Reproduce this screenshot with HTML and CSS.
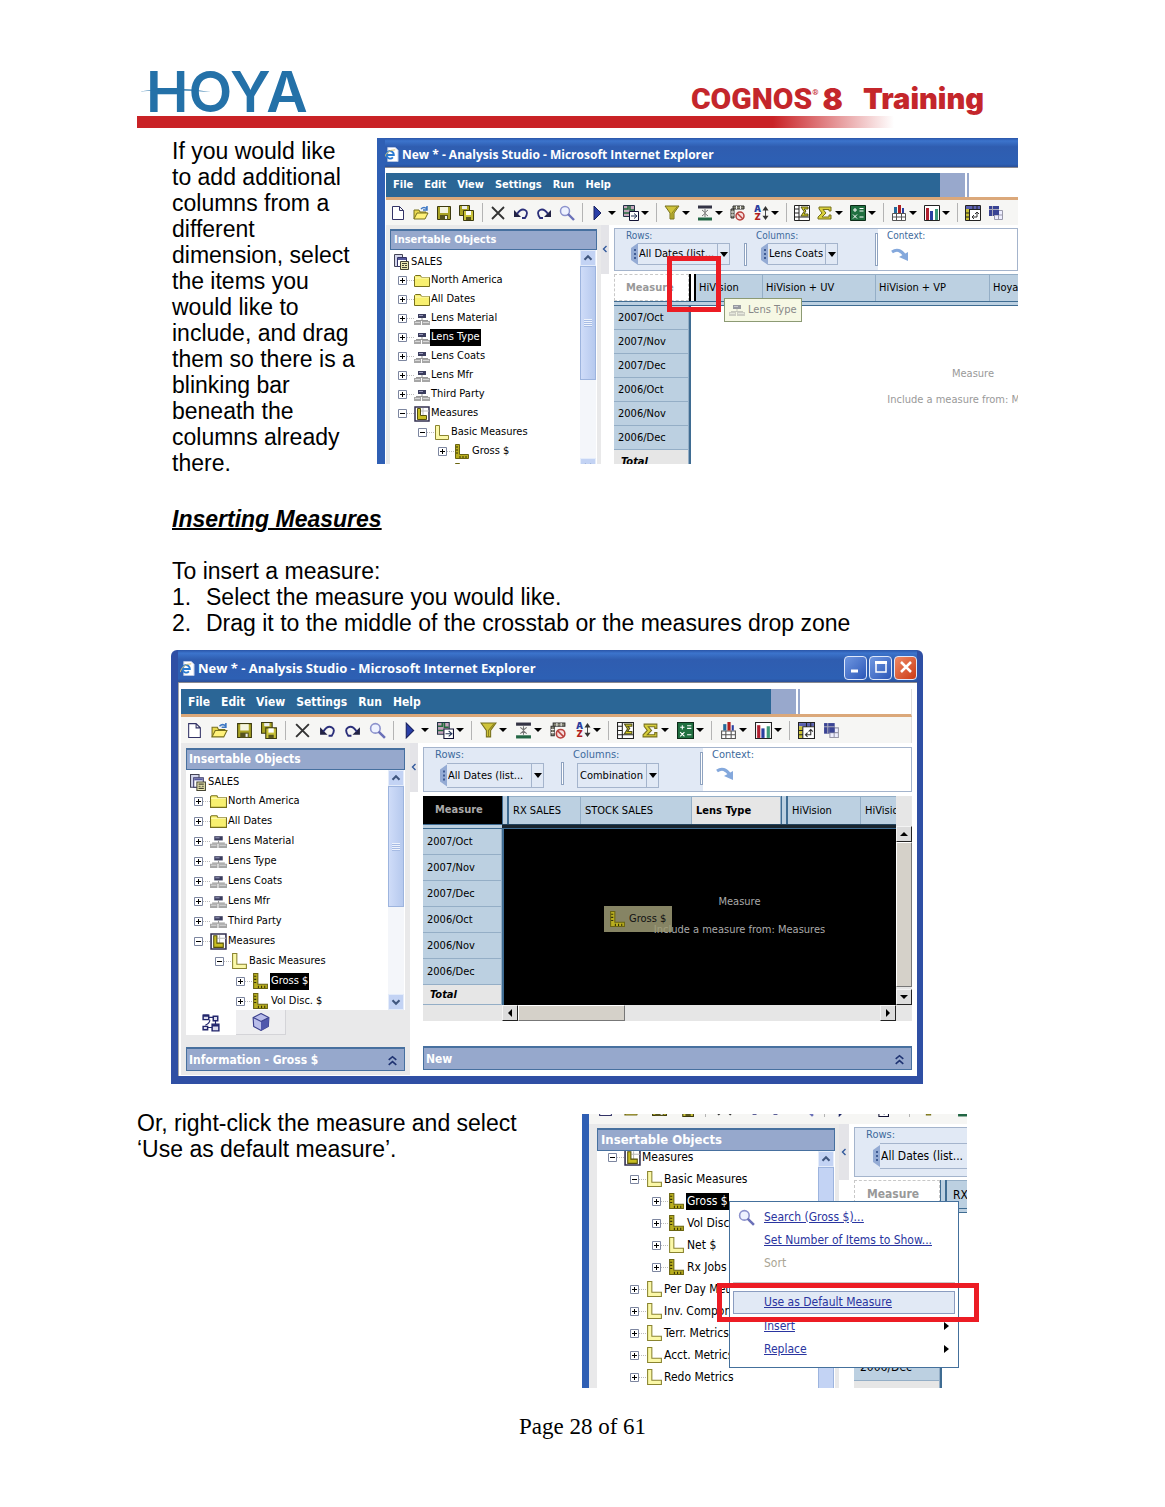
FILE: index.html
```html
<!DOCTYPE html>
<html lang="en">
<head>
<meta charset="utf-8">
<meta name="viewport" content="width=device-width, initial-scale=1">
<title>Cognos 8 Training - Inserting Measures</title>
<link rel="stylesheet" href="styles.css">
</head>
<body>
<svg class="sprite" aria-hidden="true">
  <symbol id="ie" viewBox="0 0 16 16"><path d="M4 .5h8l3 3v12H4z" fill="#fff" stroke="#b9c6e2"/><path d="M2.500 8.500h8A4 4 0 1 0 9.500 11" fill="none" stroke="#2b7bd0" stroke-width="2"/><path d="M0 12Q3 3 12 3" fill="none" stroke="#d8c070"/></symbol>
  <symbol id="new" viewBox="0 0 16 16"><path d="M2.500 1.500h7l4 4v9h-11zM9.500 1.500v4h4" fill="#fff" stroke="#336"/></symbol>
  <symbol id="open" viewBox="0 0 16 16"><path d="M1 14V5h5l1 2h6v2" fill="#e9d84e" stroke="#77701c"/><path d="M1 14l3-6h11l-3 6z" fill="#fff27a" stroke="#77701c"/><path d="M8 4q3-3 6 0M14 1v4h-4" fill="none" stroke="#3f78c4" stroke-width="1.500"/></symbol>
  <symbol id="save" viewBox="0 0 16 16"><path d="M1.500 1.500h13v13h-13z" fill="#a9a324" stroke="#3c3a10"/><path d="M4 2h8v6H4z" fill="#f4f4e0"/><path d="M4 10h8v5H4z" fill="#55531c"/><path d="M9 11h2v3H9z" fill="#eee"/></symbol>
  <symbol id="saveall" viewBox="0 0 16 16"><path d="M.5.5h10v10H.5z" fill="#a9a324" stroke="#3c3a10"/><path d="M3 1h5v3H3z" fill="#eee"/><path d="M4.500 5.500h10v10h-10z" fill="#c9c23a" stroke="#3c3a10"/><path d="M7 6h5v4H7z" fill="#fff"/><path d="M7 12h5v3H7z" fill="#55531c"/></symbol>
  <symbol id="cut" viewBox="0 0 16 16"><path d="M2 2l12 12M14 2L2 14" stroke="#333" stroke-width="1.800"/></symbol>
  <symbol id="undo" viewBox="0 0 16 16"><path d="M1 5v7h7z" fill="#224"/><path d="M4 9q4-6 8-4t0 8H9" fill="none" stroke="#2b2f7a" stroke-width="1.800"/></symbol>
  <symbol id="redo" viewBox="0 0 16 16"><path d="M15 5v7H8z" fill="#224"/><path d="M12 9Q8 3 4 5t0 8h3" fill="none" stroke="#2b2f7a" stroke-width="1.800"/></symbol>
  <symbol id="find" viewBox="0 0 16 16"><circle cx="6" cy="6" r="4.500" fill="#eef2ff" stroke="#8c92cc" stroke-width="1.500"/><path d="M9 9l6 6" stroke="#6a70b8" stroke-width="2.400"/></symbol>
  <symbol id="run" viewBox="0 0 16 16"><path d="M4 1l7 7-7 7z" fill="#2a3fa8" stroke="#1a2260"/></symbol>
  <symbol id="insert" viewBox="0 0 16 16"><path d="M.5.5h11v11H.5z" fill="#c6a4bc" stroke="#234"/><path d="M1 4h4V1M7 1v4h4M1 8h5" stroke="#236b3c" stroke-width="1.500" fill="none"/><path d="M6.500 6.500h9v9h-9z" fill="#fff" stroke="#113"/><path d="M8 11h5M11 8.500l3 2.500-3 2.500" stroke="#235" fill="none"/></symbol>
  <symbol id="filter" viewBox="0 0 16 16"><path d="M1 1h14L10 8v6H6V8z" fill="#cfc33a" stroke="#77701c"/><path d="M8 14V8l5-6" fill="none" stroke="#8a8220"/></symbol>
  <symbol id="suppress" viewBox="0 0 16 16"><path d="M1 2h14" stroke="#334" stroke-width="3"/><path d="M1 14h14" stroke="#264" stroke-width="3"/><path d="M8 4v8M5 5l3 2.500L11 5M5 11l3-2.500 3 2.500" stroke="#777" fill="none"/></symbol>
  <symbol id="hide" viewBox="0 0 16 16"><path d="M3 1h11v3H3zM1 4h3v9H1z" fill="#887" stroke="#333"/><path d="M6.500 1v3M10.500 1v3M1 7h3M1 10h3" stroke="#eee"/><circle cx="10" cy="11" r="4" fill="#f6dede" stroke="#b8403c" stroke-width="1.500"/><path d="M7 8l6 6" stroke="#b8403c" stroke-width="1.500"/></symbol>
  <symbol id="subtotal" viewBox="0 0 16 16"><path d="M.5.500h15v15H.5z" fill="#fff" stroke="#222"/><path d="M5 1v14M1 12h14M1 4h4M1 8h4" stroke="#222"/><path d="M7 2h7v2h-4l2 2-2 3h4v2H7l3-4.500z" fill="#d8d020" stroke="#55531c"/></symbol>
  <symbol id="sum" viewBox="0 0 16 16"><path d="M2 2h12v4h-2V4.500H6L9 8l-4 4h7v-2h2v4H1v-2l4-4-3-4z" fill="#d8cf3a" stroke="#77701c"/></symbol>
  <symbol id="calc" viewBox="0 0 16 16"><path d="M.5.500h15v15H.5z" fill="#207040" stroke="#0c2c18"/><path d="M3 5h4M5 3v4M9.500 3.500h4M9.500 6h4M3 9.500l4 4M7 9.500l-4 4M9.500 12h4" stroke="#fff"/></symbol>
  <symbol id="tchart" viewBox="0 0 16 16"><path d="M1.500 8.500h13v7h-13zM1 12h14M5.500 9v6M10.500 9v6" fill="#fff" stroke="#555"/><path d="M3 2h3v6H3z" fill="#236b9c"/><path d="M7 0h3v8H7z" fill="#b02020"/><path d="M11 3h2v5h-2z" fill="#2a3fa0"/></symbol>
  <symbol id="chart" viewBox="0 0 16 16"><path d="M.5.500h15v15H.5z" fill="#fff" stroke="#222"/><path d="M2 3h3v12H2z" fill="#b02030"/><path d="M6 6h3v9H6z" fill="#2a3fa0"/><path d="M11 4h3v11h-3z" fill="#3c9a78"/></symbol>
  <symbol id="swap" viewBox="0 0 16 16"><path d="M.5.500h15v15H.5z" fill="#fff" stroke="#222"/><path d="M1 1h14v3H1z" fill="#5a60b0"/><path d="M1 4h3v11H1z" fill="#c8c030"/><path d="M4 4.500h11M4.500 4v11M8 1v3M12 1v3M1 8h3M1 12h3" stroke="#222"/><path d="M7 12h5V7M9 10l-2 2 2 2M10 9l2-2 2 2" fill="none" stroke="#333"/></symbol>
  <symbol id="own" viewBox="0 0 16 16"><path d="M1 1h10v10H1z" fill="#3a4494"/><path d="M1 4.500h10M4.500 1v10" stroke="#aab"/><path d="M6.500 5.500h8v9h-8zM7 10h8M10.500 6v9" fill="#eef" stroke="#99a"/><path d="M6 5h5v5H6z" fill="#3a4494"/></symbol>
  <symbol id="cube" viewBox="0 0 16 16"><path d="M.5.5h8v12h-8z" fill="#d4d6ec" stroke="#445"/><path d="M3.500 3.500h9v9h-9z" fill="#fff" stroke="#336"/><path d="M4 4h8v2H4z" fill="#55589c"/><path d="M6.500 7.500h8v8h-8z" fill="#ece9b0" stroke="#443"/><path d="M8 9.500h5M8 11.500h2M11 11.500h2M8 13.500h5" stroke="#443"/></symbol>
  <symbol id="folder" viewBox="0 0 16 16"><path d="M.5 13.500v-10l1-1h5l1 2h8v9z" fill="#f8f070" stroke="#77701c"/><path d="M1 5h14" stroke="#fff9b8"/></symbol>
  <symbol id="dim" viewBox="0 0 16 16"><path d="M4 3h8v4H4z" fill="#3b3d5e"/><path d="M5 4h4v1H5z" fill="#99b"/><path d="M8 7v2M2 9.500h12" stroke="#999"/><path d="M0 10h7v4H0zM8 10h8v4H8z" fill="#a6a6a6"/><path d="M1 11h5v1H1zM9 11h6v1H9z" fill="#d8d8d8"/></symbol>
  <symbol id="measures" viewBox="0 0 16 16"><path d="M1 1h14v14H1z" fill="#fff" stroke="#333050" stroke-width="1.500"/><path d="M7 5h8M9 2v9" stroke="#bbb"/><path d="M3.500 2.500h3v7h6v4h-9z" fill="#c8be22" stroke="#55500c"/></symbol>
  <symbol id="folderm" viewBox="0 0 16 16"><path d="M1.500.5h4v10h9v4h-13z" fill="#fbf8a8" stroke="#8a8430"/></symbol>
  <symbol id="ruler" viewBox="0 0 16 16"><path d="M1.500.5h4v10h9v4h-13z" fill="#b9ae1e" stroke="#6a6410"/><path d="M2 3h2M2 6h2M2 9h2M6 14v-2M9 14v-2M12 14v-2" stroke="#333008"/></symbol>
  <symbol id="plus" viewBox="0 0 9 9"><path d="M.5.500h8v8h-8z" fill="#fff" stroke="#7d86a0"/><path d="M2 4.500h5M4.500 2v5" stroke="#000"/></symbol>
  <symbol id="minus" viewBox="0 0 9 9"><path d="M.5.500h8v8h-8z" fill="#fff" stroke="#7d86a0"/><path d="M2 4.500h5" stroke="#000"/></symbol>
  <symbol id="up" viewBox="0 0 16 16"><path d="M4 10l4-4 4 4" fill="none" stroke="#40577f" stroke-width="2.400"/></symbol>
  <symbol id="down" viewBox="0 0 16 16"><path d="M4 6l4 4 4-4" fill="none" stroke="#40577f" stroke-width="2.400"/></symbol>
  <symbol id="left" viewBox="0 0 8 8"><path d="M5.500 1L2.500 4l3 3" fill="none" stroke="#335a9c" stroke-width="1.400"/></symbol>
  <symbol id="ctx" viewBox="0 0 18 14"><path d="M1 4Q8-1 14 8" fill="none" stroke="#84a8dc" stroke-width="3"/><path d="M8 9l9-5v9z" fill="#84a8dc"/></symbol>
  <symbol id="grip" viewBox="0 0 8 22"><path d="M8 0v22L1 17V5z" fill="#94abd4"/><path d="M4 6h2v2H4zM4 10h2v2H4zM4 14h2v2H4z" fill="#3f5c94"/></symbol>
  <symbol id="more" viewBox="0 0 12 12"><path d="M2.500 5.500L6 2.500l3.500 3M2.500 10L6 7l3.500 3" fill="none" stroke="#1f3372" stroke-width="1.500"/></symbol>
  <symbol id="nodes" viewBox="0 0 16 16"><path d="M1 1h5v4H1zM10 2h4v4h-4zM1 11h4v3H1zM9 9h6v6H9z" fill="#dde" stroke="#22266c" stroke-width="1.300"/><path d="M1 1.500h5M9 10h6" stroke="#22266c" stroke-width="2"/><path d="M6 3h4M12 6v3M5 12h4M7 5q0 3-4 5" fill="none" stroke="#22266c"/></symbol>
  <symbol id="box" viewBox="0 0 16 16"><path d="M8 .5l7 3.500-.5 8L8 15.500 1.500 12 1 4z" fill="#b9bdea" stroke="#3a3f8c"/><path d="M8 7.500v8l6.500-3.500.5-8z" fill="#5058ac"/><path d="M1 4l7 3.500L15 4" fill="none" stroke="#3a3f8c"/></symbol>
</svg>

<main class="page">
  <header class="masthead">
    <div class="brands">
      <div class="hoya">HOYA
        <svg class="swoosh" viewBox="0 0 72 8" aria-hidden="true"><path d="M0 4.500Q36-1 72 5Q36 2 0 4.500z" fill="#2471a8"/></svg>
      </div>
      <div class="product"><span class="cognos">COGNOS<sup>®</sup></span><span class="eight">8</span><span class="training">Training</span></div>
    </div>
    <div class="rule"></div>
  </header>

  <section class="intro">
    <p>If you would like to add additional columns from a different dimension, select the items you would like to include, and drag them so there is a blinking bar beneath the columns already there.</p>
    <figure class="shot shot-a">
      <div class="window">
        <div class="title"><svg><use href="#ie"/></svg>New * - Analysis Studio - Microsoft Internet Explorer</div>
        <div class="client">
          <nav class="menubar"><div class="menus"><a href="#file">File</a><a href="#edit">Edit</a><a href="#view">View</a><a href="#settings">Settings</a><a href="#run-menu">Run</a><a href="#help">Help</a></div><i class="tail"></i></nav>
          <div class="toolbar">
            <button aria-label="New"><svg><use href="#new"/></svg></button><button aria-label="Open"><svg><use href="#open"/></svg></button><button aria-label="Save"><svg><use href="#save"/></svg></button><button aria-label="Save as"><svg><use href="#saveall"/></svg></button><i></i>
            <button aria-label="Delete"><svg><use href="#cut"/></svg></button><button aria-label="Undo"><svg><use href="#undo"/></svg></button><button aria-label="Redo"><svg><use href="#redo"/></svg></button><button aria-label="Search"><svg><use href="#find"/></svg></button><i></i>
            <button class="drop" aria-label="Run"><svg><use href="#run"/></svg></button><button class="drop" aria-label="Insert"><svg><use href="#insert"/></svg></button><i></i>
            <button class="drop" aria-label="Filter"><svg><use href="#filter"/></svg></button><button class="drop" aria-label="Suppress"><svg><use href="#suppress"/></svg></button><button aria-label="Exclude"><svg><use href="#hide"/></svg></button><button class="drop" aria-label="Sort"><span class="az"><b>A</b><b>Z</b></span><svg class="updown" viewBox="0 0 7 16"><path d="M3.500 3v10" stroke="#333"/><path d="M0 5l3.500-5L7 5zM0 11l3.500 5L7 11z" fill="#333"/></svg></button><i></i>
            <button aria-label="Subtotals"><svg><use href="#subtotal"/></svg></button><button class="drop" aria-label="Summarize"><svg><use href="#sum"/></svg></button><button class="drop" aria-label="Calculate"><svg><use href="#calc"/></svg></button><i></i>
            <button class="drop" aria-label="Display"><svg><use href="#tchart"/></svg></button><button class="drop" aria-label="Chart type"><svg><use href="#chart"/></svg></button><i></i>
            <button aria-label="Swap rows and columns"><svg><use href="#swap"/></svg></button><button aria-label="Get data later"><svg><use href="#own"/></svg></button>
          </div>
          <div class="body">
            <aside class="side">
              <h3 class="bar">Insertable Objects</h3>
              <div class="treebox">
                <ul class="tree">
                  <li class="root"><svg class="ico"><use href="#cube"/></svg><span>SALES</span></li>
                  <li><button aria-label="Expand"><svg><use href="#plus"/></svg></button><svg class="ico"><use href="#folder"/></svg><span>North America</span></li>
                  <li><button aria-label="Expand"><svg><use href="#plus"/></svg></button><svg class="ico"><use href="#folder"/></svg><span>All Dates</span></li>
                  <li><button aria-label="Expand"><svg><use href="#plus"/></svg></button><svg class="ico"><use href="#dim"/></svg><span>Lens Material</span></li>
                  <li><button aria-label="Expand"><svg><use href="#plus"/></svg></button><svg class="ico"><use href="#dim"/></svg><span class="picked">Lens Type</span></li>
                  <li><button aria-label="Expand"><svg><use href="#plus"/></svg></button><svg class="ico"><use href="#dim"/></svg><span>Lens Coats</span></li>
                  <li><button aria-label="Expand"><svg><use href="#plus"/></svg></button><svg class="ico"><use href="#dim"/></svg><span>Lens Mfr</span></li>
                  <li><button aria-label="Expand"><svg><use href="#plus"/></svg></button><svg class="ico"><use href="#dim"/></svg><span>Third Party</span></li>
                  <li><button aria-label="Collapse"><svg><use href="#minus"/></svg></button><svg class="ico"><use href="#measures"/></svg><span>Measures</span></li>
                  <li class="l2"><button aria-label="Collapse"><svg><use href="#minus"/></svg></button><svg class="ico"><use href="#folderm"/></svg><span>Basic Measures</span></li>
                  <li class="l3"><button aria-label="Expand"><svg><use href="#plus"/></svg></button><svg class="ico"><use href="#ruler"/></svg><span>Gross $</span></li>
                  <li class="l3"><button aria-label="Expand"><svg><use href="#plus"/></svg></button><svg class="ico"><use href="#ruler"/></svg></li>
                </ul>
                <div class="scroll"><svg><use href="#up"/></svg><div class="thumb"></div><svg class="end"><use href="#down"/></svg></div>
              </div>
            </aside>
            <button class="handle" aria-label="Hide panel"><svg><use href="#left"/></svg></button>
            <div class="work">
              <div class="zones">
                <div class="zone"><label for="rows-a">Rows:</label><div class="chip"><svg class="grip"><use href="#grip"/></svg><select id="rows-a"><option>All Dates (list...</option></select></div></div>
                <i class="split low"></i>
                <div class="zone cols"><label for="cols-a">Columns:</label><div class="chip"><svg class="grip"><use href="#grip"/></svg><select id="cols-a"><option>Lens Coats</option></select></div></div>
                <i class="split"></i>
                <div class="zone context"><span class="label">Context:</span><svg class="ctx"><use href="#ctx"/></svg></div>
              </div>
              <div class="crop">
                <table class="crosstab">
                  <colgroup><col class="a0"><col class="gap"><col class="a1"><col class="a2"><col class="a3"><col class="a4"></colgroup>
                  <thead>
                    <tr><th class="corner">Measure</th><td class="cursor"></td><th>HiVision</th><th>HiVision + UV</th><th>HiVision + VP</th><th>Hoya</th></tr>
                    <tr class="band"><td></td><td colspan="5"></td></tr>
                  </thead>
                  <tbody>
                    <tr><th>2007/Oct</th><td class="drop-area" colspan="5" rowspan="7"><p>Measure</p><p>Include a measure from: Measures</p></td></tr>
                    <tr><th>2007/Nov</th></tr><tr><th>2007/Dec</th></tr><tr><th>2006/Oct</th></tr><tr><th>2006/Nov</th></tr><tr><th>2006/Dec</th></tr>
                    <tr class="total"><th>Total</th></tr>
                  </tbody>
                </table>
              </div>
            </div>
          </div>
        </div>
      </div>
      <div class="mark mark-a"></div>
      <div class="tip"><svg class="ico"><use href="#dim"/></svg>Lens Type</div>
    </figure>
  </section>

  <section class="steps">
    <h2>Inserting Measures</h2>
    <p>To insert a measure:</p>
    <ol><li>Select the measure you would like.</li><li>Drag it to the middle of the crosstab or the measures drop zone</li></ol>
  </section>

  <figure class="shot shot-b">
    <div class="window">
      <div class="title"><svg><use href="#ie"/></svg><span>New * - Analysis Studio - Microsoft Internet Explorer</span>
        <div class="controls">
          <button aria-label="Minimize"><svg viewBox="0 0 20 20"><path d="M5 14h7" stroke="#fff" stroke-width="3"/></svg></button>
          <button aria-label="Maximize"><svg viewBox="0 0 20 20"><path d="M5 6v9h10V5H5" fill="none" stroke="#fff" stroke-width="1.500"/><path d="M4 5.500h12" stroke="#fff" stroke-width="3"/></svg></button>
          <button class="close" aria-label="Close"><svg viewBox="0 0 20 20"><path d="M5 5l10 10M15 5L5 15" stroke="#fff" stroke-width="2.500"/></svg></button>
        </div>
      </div>
      <div class="client">
        <nav class="menubar"><div class="menus"><a href="#file">File</a><a href="#edit">Edit</a><a href="#view">View</a><a href="#settings">Settings</a><a href="#run-menu">Run</a><a href="#help">Help</a></div><i class="tail"></i></nav>
        <div class="toolbar">
          <button aria-label="New"><svg><use href="#new"/></svg></button><button aria-label="Open"><svg><use href="#open"/></svg></button><button aria-label="Save"><svg><use href="#save"/></svg></button><button aria-label="Save as"><svg><use href="#saveall"/></svg></button><i></i>
          <button aria-label="Delete"><svg><use href="#cut"/></svg></button><button aria-label="Undo"><svg><use href="#undo"/></svg></button><button aria-label="Redo"><svg><use href="#redo"/></svg></button><button aria-label="Search"><svg><use href="#find"/></svg></button><i></i>
          <button class="drop" aria-label="Run"><svg><use href="#run"/></svg></button><button class="drop" aria-label="Insert"><svg><use href="#insert"/></svg></button><i></i>
          <button class="drop" aria-label="Filter"><svg><use href="#filter"/></svg></button><button class="drop" aria-label="Suppress"><svg><use href="#suppress"/></svg></button><button aria-label="Exclude"><svg><use href="#hide"/></svg></button><button class="drop" aria-label="Sort"><span class="az"><b>A</b><b>Z</b></span><svg class="updown" viewBox="0 0 7 16"><path d="M3.500 3v10" stroke="#333"/><path d="M0 5l3.500-5L7 5zM0 11l3.500 5L7 11z" fill="#333"/></svg></button><i></i>
          <button aria-label="Subtotals"><svg><use href="#subtotal"/></svg></button><button class="drop" aria-label="Summarize"><svg><use href="#sum"/></svg></button><button class="drop" aria-label="Calculate"><svg><use href="#calc"/></svg></button><i></i>
          <button class="drop" aria-label="Display"><svg><use href="#tchart"/></svg></button><button class="drop" aria-label="Chart type"><svg><use href="#chart"/></svg></button><i></i>
          <button aria-label="Swap rows and columns"><svg><use href="#swap"/></svg></button><button aria-label="Get data later"><svg><use href="#own"/></svg></button>
        </div>
        <div class="body">
          <aside class="side">
            <h3 class="bar">Insertable Objects</h3>
            <div class="treebox">
              <ul class="tree">
                <li class="root"><svg class="ico"><use href="#cube"/></svg><span>SALES</span></li>
                <li><button aria-label="Expand"><svg><use href="#plus"/></svg></button><svg class="ico"><use href="#folder"/></svg><span>North America</span></li>
                <li><button aria-label="Expand"><svg><use href="#plus"/></svg></button><svg class="ico"><use href="#folder"/></svg><span>All Dates</span></li>
                <li><button aria-label="Expand"><svg><use href="#plus"/></svg></button><svg class="ico"><use href="#dim"/></svg><span>Lens Material</span></li>
                <li><button aria-label="Expand"><svg><use href="#plus"/></svg></button><svg class="ico"><use href="#dim"/></svg><span>Lens Type</span></li>
                <li><button aria-label="Expand"><svg><use href="#plus"/></svg></button><svg class="ico"><use href="#dim"/></svg><span>Lens Coats</span></li>
                <li><button aria-label="Expand"><svg><use href="#plus"/></svg></button><svg class="ico"><use href="#dim"/></svg><span>Lens Mfr</span></li>
                <li><button aria-label="Expand"><svg><use href="#plus"/></svg></button><svg class="ico"><use href="#dim"/></svg><span>Third Party</span></li>
                <li><button aria-label="Collapse"><svg><use href="#minus"/></svg></button><svg class="ico"><use href="#measures"/></svg><span>Measures</span></li>
                <li class="l2"><button aria-label="Collapse"><svg><use href="#minus"/></svg></button><svg class="ico"><use href="#folderm"/></svg><span>Basic Measures</span></li>
                <li class="l3"><button aria-label="Expand"><svg><use href="#plus"/></svg></button><svg class="ico"><use href="#ruler"/></svg><span class="picked">Gross $</span></li>
                <li class="l3"><button aria-label="Expand"><svg><use href="#plus"/></svg></button><svg class="ico"><use href="#ruler"/></svg><span>Vol Disc. $</span></li>
              </ul>
              <div class="scroll"><svg><use href="#up"/></svg><div class="thumb"></div><svg class="end"><use href="#down"/></svg></div>
            </div>
            <div class="tabs"><button class="on" aria-label="Source tree"><svg><use href="#nodes"/></svg></button><button aria-label="Analysis items"><svg><use href="#box"/></svg></button></div>
            <h3 class="bar info">Information - Gross $<svg><use href="#more"/></svg></h3>
          </aside>
          <button class="handle" aria-label="Hide panel"><svg><use href="#left"/></svg></button>
          <div class="work">
            <div class="zones">
              <div class="zone"><label for="rows-b">Rows:</label><div class="chip"><svg class="grip"><use href="#grip"/></svg><select id="rows-b"><option>All Dates (list...</option></select></div></div>
              <i class="split low"></i>
              <div class="zone cols"><label for="cols-b">Columns:</label><div class="chip"><select id="cols-b"><option>Combination</option></select></div></div>
              <i class="split"></i>
              <div class="zone context"><span class="label">Context:</span><svg class="ctx"><use href="#ctx"/></svg></div>
            </div>
            <div class="grid">
              <div class="crop">
                <table class="crosstab dark">
                  <colgroup><col class="b0"><col class="gap"><col class="b1"><col class="b2"><col class="b3"><col class="gap"><col class="b4"><col class="b5"></colgroup>
                  <thead>
                    <tr><th class="corner">Measure</th><td class="div"></td><th>RX SALES</th><th>STOCK SALES</th><th class="strong">Lens Type</th><td class="div"></td><th>HiVision</th><th>HiVision + UV</th></tr>
                    <tr class="band"><td></td><td colspan="7"></td></tr>
                  </thead>
                  <tbody>
                    <tr><th>2007/Oct</th><td class="drop-area" colspan="7" rowspan="7"><p>Measure</p><p>Include a measure from: Measures</p></td></tr>
                    <tr><th>2007/Nov</th></tr><tr><th>2007/Dec</th></tr><tr><th>2006/Oct</th></tr><tr><th>2006/Nov</th></tr><tr><th>2006/Dec</th></tr>
                    <tr class="total"><th>Total</th></tr>
                  </tbody>
                </table>
              </div>
              <div class="vbar"><b class="n"></b><span></span><b class="s"></b></div>
              <div class="hbar"><b class="w"></b><span></span><b class="e"></b></div>
            </div>
            <h3 class="bar info">New<svg><use href="#more"/></svg></h3>
          </div>
        </div>
      </div>
    </div>
    <div class="ghost"><svg class="ico"><use href="#ruler"/></svg>Gross $</div>
  </figure>

  <section class="outro">
    <p>Or, right-click the measure and select ‘Use as default measure’.</p>
    <figure class="shot shot-c">
      <div class="window">
        <div class="client">
          <div class="toolbar">
            <button aria-label="New"><svg><use href="#new"/></svg></button><button aria-label="Open"><svg><use href="#open"/></svg></button><button aria-label="Save"><svg><use href="#save"/></svg></button><button aria-label="Save as"><svg><use href="#saveall"/></svg></button><i></i>
            <button aria-label="Delete"><svg><use href="#cut"/></svg></button><button aria-label="Undo"><svg><use href="#undo"/></svg></button><button aria-label="Redo"><svg><use href="#redo"/></svg></button><button aria-label="Search"><svg><use href="#find"/></svg></button><i></i>
            <button class="drop" aria-label="Run"><svg><use href="#run"/></svg></button><button class="drop" aria-label="Insert"><svg><use href="#insert"/></svg></button><i></i>
            <button class="drop" aria-label="Filter"><svg><use href="#filter"/></svg></button><button class="drop" aria-label="Suppress"><svg><use href="#suppress"/></svg></button>
          </div>
          <div class="body">
            <aside class="side">
              <h3 class="bar">Insertable Objects</h3>
              <div class="treebox">
                <ul class="tree">
                  <li><button aria-label="Collapse"><svg><use href="#minus"/></svg></button><svg class="ico"><use href="#measures"/></svg><span>Measures</span></li>
                  <li class="l2"><button aria-label="Collapse"><svg><use href="#minus"/></svg></button><svg class="ico"><use href="#folderm"/></svg><span>Basic Measures</span></li>
                  <li class="l3"><button aria-label="Expand"><svg><use href="#plus"/></svg></button><svg class="ico"><use href="#ruler"/></svg><span class="picked">Gross $</span></li>
                  <li class="l3"><button aria-label="Expand"><svg><use href="#plus"/></svg></button><svg class="ico"><use href="#ruler"/></svg><span>Vol Disc. $</span></li>
                  <li class="l3"><button aria-label="Expand"><svg><use href="#plus"/></svg></button><svg class="ico"><use href="#folderm"/></svg><span>Net $</span></li>
                  <li class="l3"><button aria-label="Expand"><svg><use href="#plus"/></svg></button><svg class="ico"><use href="#ruler"/></svg><span>Rx Jobs</span></li>
                  <li class="l2"><button aria-label="Expand"><svg><use href="#plus"/></svg></button><svg class="ico"><use href="#folderm"/></svg><span>Per Day Metrics</span></li>
                  <li class="l2"><button aria-label="Expand"><svg><use href="#plus"/></svg></button><svg class="ico"><use href="#folderm"/></svg><span>Inv. Components</span></li>
                  <li class="l2"><button aria-label="Expand"><svg><use href="#plus"/></svg></button><svg class="ico"><use href="#folderm"/></svg><span>Terr. Metrics</span></li>
                  <li class="l2"><button aria-label="Expand"><svg><use href="#plus"/></svg></button><svg class="ico"><use href="#folderm"/></svg><span>Acct. Metrics</span></li>
                  <li class="l2"><button aria-label="Expand"><svg><use href="#plus"/></svg></button><svg class="ico"><use href="#folderm"/></svg><span>Redo Metrics</span></li>
                </ul>
                <div class="scroll"><svg><use href="#up"/></svg><div class="thumb"></div></div>
              </div>
            </aside>
            <button class="handle" aria-label="Hide panel"><svg><use href="#left"/></svg></button>
            <div class="work">
              <div class="zones">
                <div class="zone"><label for="rows-c">Rows:</label><div class="chip"><svg class="grip"><use href="#grip"/></svg><select id="rows-c"><option>All Dates (list...</option></select></div></div>
              </div>
              <div class="crop">
                <table class="crosstab">
                  <colgroup><col class="c0"><col class="gap"><col class="c1"></colgroup>
                  <thead>
                    <tr><th class="corner">Measure</th><td class="div"></td><th>RX</th></tr>
                    <tr class="band"><td></td><td colspan="2"></td></tr>
                  </thead>
                  <tbody>
                    <tr><th></th><td class="drop-area" colspan="2" rowspan="7"></td></tr>
                    <tr><th></th></tr><tr><th></th></tr><tr><th></th></tr><tr><th></th></tr><tr><th>2006/Dec</th></tr>
                    <tr class="total"><th></th></tr>
                  </tbody>
                </table>
              </div>
            </div>
          </div>
        </div>
      </div>
      <div class="popup">
        <a href="#search"><svg><use href="#find"/></svg>Search (Gross $)...</a>
        <a href="#number">Set Number of Items to Show...</a>
        <span>Sort</span>
        <hr>
        <a class="hot" href="#default">Use as Default Measure</a>
        <a class="sub" href="#insert-menu">Insert</a>
        <a class="sub" href="#replace">Replace</a>
      </div>
      <div class="mark mark-c"></div>
    </figure>
  </section>

  <footer>Page 28 of 61</footer>
</main>
</body>
</html>
```

FILE: styles.css
```css
* { box-sizing: border-box; }

body {
  margin: 0;
  background: #fff;
  color: #000;
  font: 23px/26px "Liberation Sans", Arial, sans-serif;
}

p, h2, h3, ol, ul, figure { margin: 0; padding: 0; }
ul, ol { list-style: none; }
button { margin: 0; padding: 0; border: 0; background: none; font: inherit; }
.sprite { position: absolute; width: 0; height: 0; }

.page { padding: 68px 137px 60px; }

/* Masthead */
.brands { display: flex; justify-content: space-between; align-items: center; height: 48px; }
.hoya {
  position: relative;
  padding-left: 9px;
  color: #2471a8;
  font: 600 57px/48px Inter, sans-serif;
}
.swoosh { position: absolute; left: 2px; top: 19px; width: 72px; height: 8px; }
.product { display: flex; align-items: center; padding: 14px 44px 0 0; color: #c4262b; }
.cognos { font: 900 30px/32px Roboto, sans-serif; }
.cognos sup { font-size: 8px; line-height: 8px; vertical-align: 14px; }
.eight { margin: 0 20px 0 4px; font: 900 30px/32px Inter, sans-serif; }
.training { font: 900 29px/32px Inter, sans-serif; }
.rule {
  height: 12px;
  margin-right: 134px;
  background: linear-gradient(to right, #c92226 84%, transparent);
}

/* Page sections */
.intro { display: flex; gap: 20px; margin-top: 10px; padding: 0 10px 0 35px; }
.intro > p { flex: 0 0 185px; }
.steps { padding-left: 35px; }
.steps h2 { margin: 30px 0 26px; font-size: 23px; font-style: italic; text-decoration: underline; text-decoration-thickness: 2px; }
.steps ol { counter-reset: step; }
.steps li { display: flex; counter-increment: step; }
.steps li::before { content: counter(step) "."; flex: none; width: 34px; }
.outro { display: flex; justify-content: space-between; gap: 20px; margin-top: 30px; padding-right: 61px; }
.outro > p { flex: 0 1 400px; margin-top: -4px; }
footer { margin-top: 26px; text-align: center; font-family: "Liberation Serif", "Times New Roman", serif; }

/* Embedded application windows */
.shot {
  --text: 11px;
  --row: 19px;
  --icon: 16px;
  --gap: 7px;
  --level: 20px;
  --inset: 8px;
  position: relative;
  font: var(--text)/14px "DejaVu Sans Condensed", "DejaVu Sans", sans-serif;
  white-space: nowrap;
}
.shot-a { flex: 1; min-width: 0; }
.shot-b { --row: 20px; --icon: 17px; --gap: 8px; --level: 21px; max-width: 752px; margin: 14px 0 0 34px; }
.shot-c { --text: 12px; --row: 22px; --icon: 17px; --gap: 10px; --level: 22px; --inset: 11px; flex: 0 0 385px; min-width: 0; }

.window { overflow: hidden; border-left: 8px solid #2f5fb4; }
.shot-a .window { height: 326px; }
.shot-b .window { border: solid #2f4fa4; border-width: 0 6px 8px 7px; border-radius: 6px 6px 0 0; }
.shot-c .window { height: 274px; border-left-width: 7px; }

.title {
  display: flex;
  align-items: center;
  gap: 3px;
  height: 30px;
  margin-left: -8px;
  padding: 4px 0 0 7px;
  border-bottom: 1px solid #8a8a90;
  background: linear-gradient(#2a55a8, #3c74cc 10%, #2f5db0 30%, #2d60b4 90%, #2a4f98);
  color: #fff;
  font: 700 12px/20px "Open Sans", sans-serif;
}
.title svg { flex: none; width: 15px; height: 15px; }
.shot-b .title { height: 33px; margin: 0 -6px 0 -7px; padding-left: 9px; font-size: 13px; }
.controls { display: flex; gap: 2px; margin-left: auto; padding-right: 6px; }
.controls button { width: 23px; height: 24px; border: 1px solid #dfe8fa; border-radius: 4px; background: linear-gradient(135deg, #6f97e0, #2c57b8); }
.controls svg { width: 20px; height: 20px; }
.controls .close { background: linear-gradient(135deg, #ee8a66, #cc3a14); }

.client { padding: 5px 0 0 1px; background: #fff; }
.shot-b .client { padding: 6px 5px 1px 2px; border-left: 1px solid #a9a9a9; }
.shot-c .client { padding: 0; }

.menubar { display: flex; height: 27px; border-bottom: 3px solid #dba87a; }
.shot-b .menubar { height: 28px; border-right: 1px solid #ddd; }
.menus {
  display: flex;
  flex: 1;
  align-items: center;
  gap: 11px;
  padding-left: 7px;
  background: #2b6696;
  font-size: 11px;
  font-weight: 700;
}
.shot-b .menus { font-size: 12px; }
.menus a { color: #fff; text-decoration: none; }
.tail { flex: none; width: 78px; background: linear-gradient(to right, #98a8cc 25px, #fff 25px, #fff 27px, #98a8cc 27px, #98a8cc 29px, #fff 29px); }
.shot-b .tail { width: 140px; }

.toolbar { display: flex; align-items: center; gap: var(--gap); height: 25px; padding-left: 4px; background: #f6f6f4; }
.shot-b .toolbar { height: 26px; padding-left: 5px; border-right: 1px solid #ddd; }
.shot-c .toolbar { align-items: flex-end; height: 10px; padding: 0 0 7px 8px; }
.toolbar > * { flex: none; }
.toolbar button { display: flex; align-items: center; }
.toolbar svg { width: var(--icon); height: var(--icon); }
.toolbar i { width: 1px; height: 19px; background: #b4b4b4; }
.shot-b .toolbar i { margin-left: -1px; }
.drop::after { content: ""; margin-left: 2px; border: solid transparent; border-width: 4px 4px 0; border-top-color: #000; }
.az { display: flex; flex-direction: column; width: 9px; color: #2a3fa0; font: 700 9px/8px Inter, sans-serif; }
.az b + b { color: #b02020; }
.toolbar .updown { width: 7px; height: 14px; }

.body { display: flex; background: #fff; }
.side { flex: none; width: 215px; padding: 4px 4px 0; background: #e9e9ea; }
.shot-b .side { width: 229px; padding: 5px 5px 4px; }
.shot-c .side { width: 250px; padding: 4px 4px 0 8px; }

.bar {
  height: 21px;
  padding: 0 3px;
  border: 1px solid #47709f;
  border-top-width: 2px;
  background: #96a8cc;
  color: #fff;
  font-size: 11px;
  line-height: 18px;
}
.shot-b .bar { height: 22px; padding: 0 2px; font-size: 12px; line-height: 19px; }
.shot-b .bar.info { display: flex; justify-content: space-between; height: 24px; line-height: 22px; }
.info svg { width: 13px; height: 13px; margin: 5px 3px 0 0; }
.shot-c .bar { position: relative; height: 23px; font-size: 13px; line-height: 20px; }

.treebox { display: flex; justify-content: space-between; height: 230px; background: #fff; }
.shot-b .treebox { height: 240px; overflow: hidden; }
.shot-c .treebox { height: 240px; }
.tree { padding-top: 3px; }
.shot-c .tree { margin-top: -5px; padding: 0; }
.tree li { display: flex; align-items: center; height: var(--row); padding-left: var(--inset); }
.tree .root { height: 18px; padding-left: 4px; }
.tree .l2 { padding-left: calc(var(--inset) + var(--level)); }
.tree .l3 { padding-left: calc(var(--inset) + var(--level) * 2); }
.tree button { display: flex; align-items: center; }
.tree button::after { content: ""; width: 7px; border-top: 1px dotted #bbb; }
.tree button svg { width: 9px; height: 9px; }
.ico { flex: none; width: var(--icon); height: var(--icon); }
.tree .l3 .ico { margin-right: 1px; }
.tree span { padding: 1px 1px 2px; }
.picked { background: #000; color: #fff; }

.scroll { display: flex; flex-direction: column; width: 16px; margin-right: 1px; background: #f4f6fa; }
.scroll svg { flex: none; width: 16px; height: 16px; border: 1px solid #e4ecfa; background: #c3d3f4; }
.scroll .end { margin-top: auto; }
.thumb {
  height: 114px;
  border: 1px solid #9db4de;
  background: repeating-linear-gradient(#eef3fc 0 1px, #a6bbe4 1px 2px) center/8px 8px no-repeat, linear-gradient(to right, #cfdcf8, #b6c9ee);
}
.shot-b .thumb { height: 121px; }
.shot-c .thumb { height: 230px; background: #c3d3f4; }
.shot-a .treebox .scroll { height: 224px; }

.tabs { display: flex; height: 37px; padding-bottom: 12px; }
.tabs button { width: 50px; border: solid #d4d4d8; border-width: 0 1px 1px 0; background: #eeeef0; }
.tabs .on { border: 0; background: #fff; }
.tabs svg { width: 18px; height: 18px; vertical-align: middle; }

.handle { flex: none; align-self: flex-start; width: 8px; height: 49px; background: #e4e4e8; }
.handle svg { width: 8px; height: 8px; }
.shot-c .handle { width: 10px; height: 56px; }

.work { flex: 1; min-width: 0; margin-left: 5px; padding-top: 3px; }
.shot-b .work { padding-top: 4px; }

/* Drop zones above the crosstab */
.zones { display: flex; height: 43px; border: 1px solid #a4b4cc; background: #e1e9f5; color: #3d6a9c; }
.shot-b .zones { height: 45px; }
.shot-c .zones { height: 50px; border-right: 0; }
.zone { flex: none; width: 129px; padding-left: 11px; }
.shot-b .zone { width: 137px; }
.zone.cols { padding-left: 9px; }
.shot-a .cols { width: 128px; }
.shot-b .cols { width: 136px; }
.zone.context { flex: 1; padding-left: 9px; background: #fff; }
.zone label, .zone .label { display: block; font-size: 10px; }
.shot-b label, .shot-b .label, .shot-c label { font-size: 11px; }
.zone .ctx { width: 18px; height: 14px; margin: 5px 0 0 4px; }
.split { flex: none; width: 3px; height: 33px; margin-top: 4px; border: 1px solid #8fa3c0; background: #fff; }
.split.low { height: 23px; margin-top: 14px; }
.chip { display: flex; height: 22px; padding-left: 4px; }
.shot-b .chip { height: 25px; margin-top: 1px; }
.shot-c .chip { height: 26px; margin-top: 1px; padding-left: 6px; }
.grip { flex: none; width: 8px; height: 100%; }
.chip select {
  width: 92px;
  padding: 0 14px 0 1px;
  border: 1px solid #a4b4cc;
  border-left: 0;
  border-radius: 0;
  appearance: none;
  overflow: hidden;
  background: linear-gradient(#a4b4cc, #a4b4cc) right 11px center/1px 100% no-repeat, #e1e9f5;
  color: #000;
  font: inherit;
}
.shot-a .cols select { width: 70px; }
.shot-b .chip select { width: 97px; }
.shot-b .cols select { width: 82px; padding-left: 2px; border-left: 1px solid #a4b4cc; }
.shot-c .chip select { flex: none; width: 120px; }
.chip::after { content: ""; align-self: center; margin-left: -10px; border: solid transparent; border-width: 5px 4px 0; border-top-color: #000; pointer-events: none; }

/* Crosstab */
.crop { overflow: hidden; margin-top: 3px; }
.crosstab { width: 0; table-layout: fixed; border-spacing: 0; }
.crosstab th, .crosstab td { padding: 0; overflow: hidden; }
.crosstab th {
  height: 24px;
  padding-left: 4px;
  border: solid #94aec6;
  border-width: 0 1px 1px 0;
  background: #bcd0e1;
  font-weight: 400;
  text-align: left;
}
.crosstab thead th { height: 27px; padding-left: 3px; border-width: 1px 1px 0 0; }
.crosstab thead .corner { padding-left: 11px; border: 1px dashed #c8c8c8; background: #fff; color: #999; font-weight: 700; }
.crosstab .band td { height: 5px; border: solid #3f6c92; border-width: 1px 0; background: #bcd0e1; }
.crosstab .total th { background: #e6e6e6; padding-left: 7px; font-weight: 700; font-style: italic; }
.gap { width: 7px; }
.a0 { width: 75px; }
.a1 { width: 67px; }
.a2 { width: 113px; }
.a3 { width: 114px; }
.a4 { width: 265px; }
.b0 { width: 79px; }
.b1 { width: 72px; }
.b2 { width: 111px; }
.b3 { width: 89px; }
.b4 { width: 73px; }
.b5 { width: 114px; }
.c0 { width: 86px; }
.c1 { width: 80px; }
.cursor { border: solid #000; border-width: 0 2px; background: #fff; }
.div { border: solid #3f6c92; border-width: 0 2px 0 1px; background: #bcd0e1; }
.drop-area { border-left: 2px solid #3f6c92; vertical-align: top; text-align: center; color: #999; }
.drop-area p { margin-top: 12px; }
.drop-area p:first-child { margin-top: 61px; }

.shot-b .crop { margin: 0; }
.dark th { height: 26px; }
.dark thead th { height: 28px; padding-left: 4px; }
.crosstab.dark thead .corner { border-color: #000; background: #000; color: #aaa; }
.dark .strong { background: #e6e6e6; font-weight: 700; }
.dark .band td + td { background: #18242e; border-top-color: #24445e; }
.dark .total th { height: 20px; }
.dark .drop-area { background: #000; color: #aaa; }
.dark .drop-area p { margin-top: 14px; }
.dark .drop-area p:first-child { margin-top: 66px; }
.shot-c .crosstab th { height: 28px; padding-left: 6px; }
.shot-c .crosstab thead .corner { padding-left: 12px; }

.grid { display: grid; grid-template-columns: minmax(0, 1fr) 16px; margin: 4px 0 25px; background: #e6e6e6; }
.vbar { display: flex; flex-direction: column; margin-top: 30px; }
.hbar { display: flex; height: 16px; margin-left: 79px; }
.vbar span, .hbar span { border: 1px solid #fff; border-right-color: #777; border-bottom-color: #777; background: #d5d1c9; }
.vbar span { flex: 1; margin-bottom: 2px; }
.hbar span { width: 107px; }
.vbar b, .hbar b { display: grid; place-items: center; width: 16px; height: 16px; border: 1px solid #f4f4f4; border-right-color: #222; border-bottom-color: #222; background: #dcdcdc; }
.vbar b::after, .hbar b::after { content: ""; border: 4px solid transparent; }
.vbar .n::after { border-top: 0; border-bottom-color: #000; }
.vbar .s::after { border-bottom: 0; border-top-color: #000; }
.hbar .w::after { border-left: 0; border-right-color: #000; }
.hbar .e::after { border-right: 0; border-left-color: #000; }
.hbar .e { margin-left: auto; }

/* Annotations and floating pieces over the windows */
.mark { position: absolute; border: 5px solid #ec1c24; pointer-events: none; }
.mark-a { left: 290px; top: 118px; width: 54px; height: 56px; }
.mark-c { left: 135px; top: 169px; width: 262px; height: 39px; }
.tip {
  position: absolute;
  left: 347px;
  top: 160px;
  display: flex;
  align-items: center;
  gap: 3px;
  height: 24px;
  padding: 0 4px;
  border: 1px solid #8c9a74;
  background: #f6f8e4;
  color: #888;
}
.tip .ico { opacity: .5; }
.ghost {
  position: absolute;
  left: 433px;
  top: 256px;
  display: flex;
  align-items: center;
  gap: 3px;
  width: 68px;
  height: 26px;
  padding-left: 5px;
  background: rgba(158, 155, 118, .85);
  color: #111;
}

.popup {
  position: absolute;
  left: 147px;
  top: 87px;
  width: 230px;
  padding: 4px 3px 6px;
  border: 1px solid #44709c;
  background: #fff;
}
.popup a, .popup span { position: relative; display: block; height: 23px; padding-left: 31px; color: #2a35a0; line-height: 23px; text-decoration: underline; }
.popup span { color: #aaa594; text-decoration: none; }
.popup svg { position: absolute; left: 5px; top: 3px; width: 17px; height: 17px; }
.popup hr { margin: 7px 0 8px; border: 0; border-top: 1px solid #c8c8c8; }
.popup .hot { margin-bottom: 1px; padding-left: 30px; border: 1px solid #8a9cc0; background: #e1e9f5; line-height: 21px; }
.popup .sub::after { content: ""; position: absolute; right: 6px; top: 7px; border: 4px solid transparent; border-left: 5px solid #000; border-right: 0; }
```
